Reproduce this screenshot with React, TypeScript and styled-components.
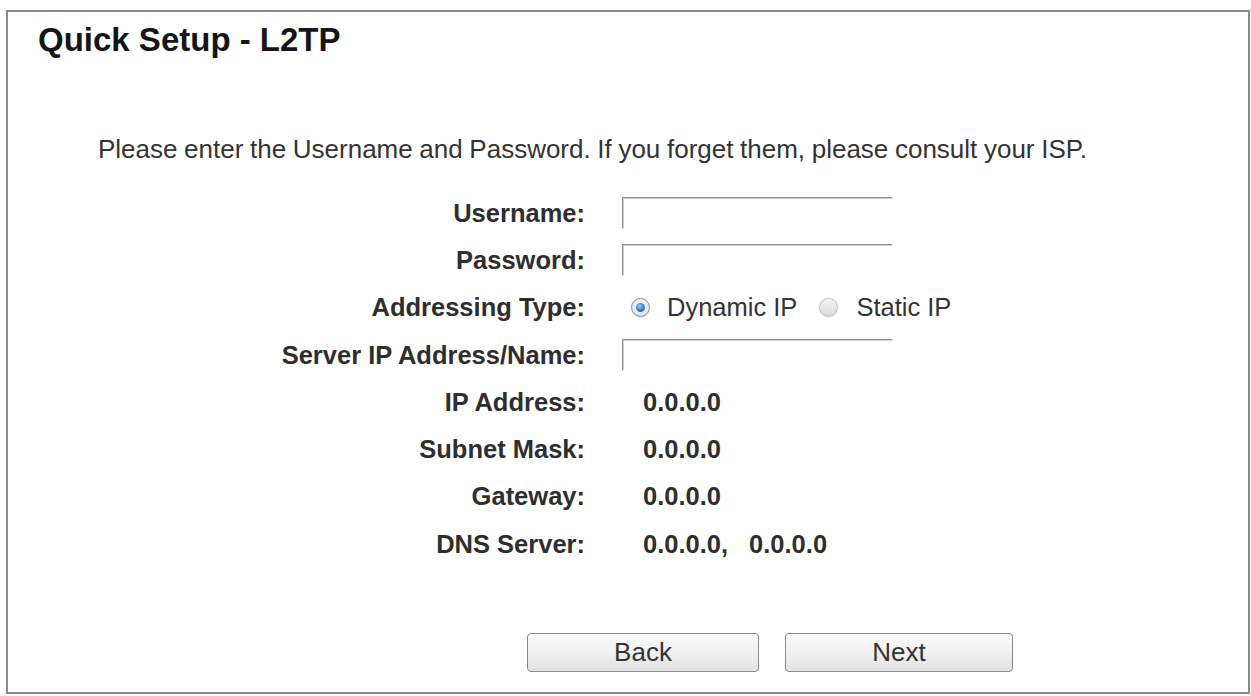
import React from "react";
import styled, { createGlobalStyle } from "styled-components";

const Global = createGlobalStyle`
  html, body { margin: 0; padding: 0; background: #ffffff; }
  body { font-family: "Liberation Sans", Arial, sans-serif; }
`;

const Frame = styled.div`
  box-sizing: border-box;
  margin: 10px 0 0 6px;
  width: 1244px;
  height: 684px;
  border: 2px solid #8a8a8a;
  display: flex;
  flex-direction: column;
`;

const Title = styled.h1`
  margin: 10px 0 0 30px;
  font-size: 33px;
  line-height: 36px;
  font-weight: bold;
  color: #151515;
`;

const Intro = styled.p`
  margin: 76px 0 0 90px;
  font-size: 26px;
  line-height: 30px;
  color: #333333;
  word-spacing: -0.6px;
`;

const Form = styled.div`
  margin-top: 25px;
  display: grid;
  grid-template-columns: 577px 1fr;
  column-gap: 37px;
  grid-auto-rows: 47.3px;
  align-items: center;
`;

const Label = styled.div`
  text-align: right;
  font-size: 25.5px;
  font-weight: bold;
  color: #2e2e2e;
  line-height: 30px;
`;

const Field = styled.div`
  display: flex;
  align-items: center;
  font-size: 25.5px;
  line-height: 30px;
  color: #333333;
`;

const Value = styled.span<{ $gap?: number }>`
  font-weight: bold;
  color: #2e2e2e;
  margin-left: ${(p) => p.$gap ?? 21}px;
`;

const TextInput = styled.input`
  box-sizing: border-box;
  width: 271px;
  height: 32px;
  margin: 0;
  padding: 0 4px;
  border: 1px solid;
  border-color: #8e8e8e #ffffff #ffffff #8e8e8e;
  box-shadow: inset 1px 1px 0 #d0d0d0;
  background: #ffffff;
  font-family: inherit;
  font-size: 20px;
  outline: none;
`;

const RadioDot = styled.span<{ $checked?: boolean; $lead: number; $trail: number }>`
  box-sizing: border-box;
  position: relative;
  display: inline-block;
  width: 19px;
  height: 19px;
  margin-left: ${(p) => p.$lead}px;
  margin-right: ${(p) => p.$trail}px;
  border-radius: 50%;
  border: 1px solid ${(p) => (p.$checked ? "#8393a6" : "#c2c2c2")};
  background: ${(p) =>
    p.$checked
      ? "radial-gradient(circle at 50% 40%, #ffffff 0%, #e6e9ee 60%, #c9ced6 100%)"
      : "linear-gradient(#f4f4f4, #d9d9d9)"};
  box-shadow: 0 0 1px 1px rgba(0, 0, 0, 0.06);

  &::after {
    content: "";
    display: ${(p) => (p.$checked ? "block" : "none")};
    position: absolute;
    left: 4px;
    top: 4px;
    width: 9px;
    height: 9px;
    border-radius: 50%;
    background: radial-gradient(circle at 40% 35%, #9fd0ff 0%, #3f86d6 45%, #1b4f95 100%);
  }
`;

const RadioText = styled.span`
  color: #333333;
`;

const Buttons = styled.div`
  margin: 66px 0 0 519px;
  display: flex;
  gap: 26px;
`;

const Button = styled.button<{ $w: number }>`
  box-sizing: border-box;
  width: ${(p) => p.$w}px;
  height: 39px;
  border: 1px solid #8a8a8a;
  border-radius: 4px;
  background: linear-gradient(#fbfbfb 0%, #f0f0f0 50%, #e2e2e2 100%);
  font-family: "Liberation Sans", Arial, sans-serif;
  font-size: 26px;
  color: #333333;
  padding: 0;
  line-height: 37px;
  cursor: pointer;
`;

const rows: { label: string; value: string }[] = [
  { label: "IP Address:", value: "0.0.0.0" },
  { label: "Subnet Mask:", value: "0.0.0.0" },
  { label: "Gateway:", value: "0.0.0.0" },
];

export default function App() {
  return (
    <>
      <Global />
      <Frame>
        <Title>Quick Setup - L2TP</Title>
        <Intro>
          Please enter the Username and Password. If you forget them, please consult your ISP.
        </Intro>
        <Form>
          <Label>Username:</Label>
          <Field>
            <TextInput type="text" />
          </Field>
          <Label>Password:</Label>
          <Field>
            <TextInput type="password" />
          </Field>
          <Label>Addressing Type:</Label>
          <Field>
            <RadioDot $checked $lead={9} $trail={17} />
            <RadioText>Dynamic IP</RadioText>
            <RadioDot $lead={22} $trail={18} />
            <RadioText>Static IP</RadioText>
          </Field>
          <Label>Server IP Address/Name:</Label>
          <Field>
            <TextInput type="text" />
          </Field>
          {rows.map((r) => (
            <React.Fragment key={r.label}>
              <Label>{r.label}</Label>
              <Field>
                <Value>{r.value}</Value>
              </Field>
            </React.Fragment>
          ))}
          <Label>DNS Server:</Label>
          <Field>
            <Value>0.0.0.0,</Value>
            <Value $gap={21}>0.0.0.0</Value>
          </Field>
        </Form>
        <Buttons>
          <Button $w={232}>Back</Button>
          <Button $w={228}>Next</Button>
        </Buttons>
      </Frame>
    </>
  );
}
